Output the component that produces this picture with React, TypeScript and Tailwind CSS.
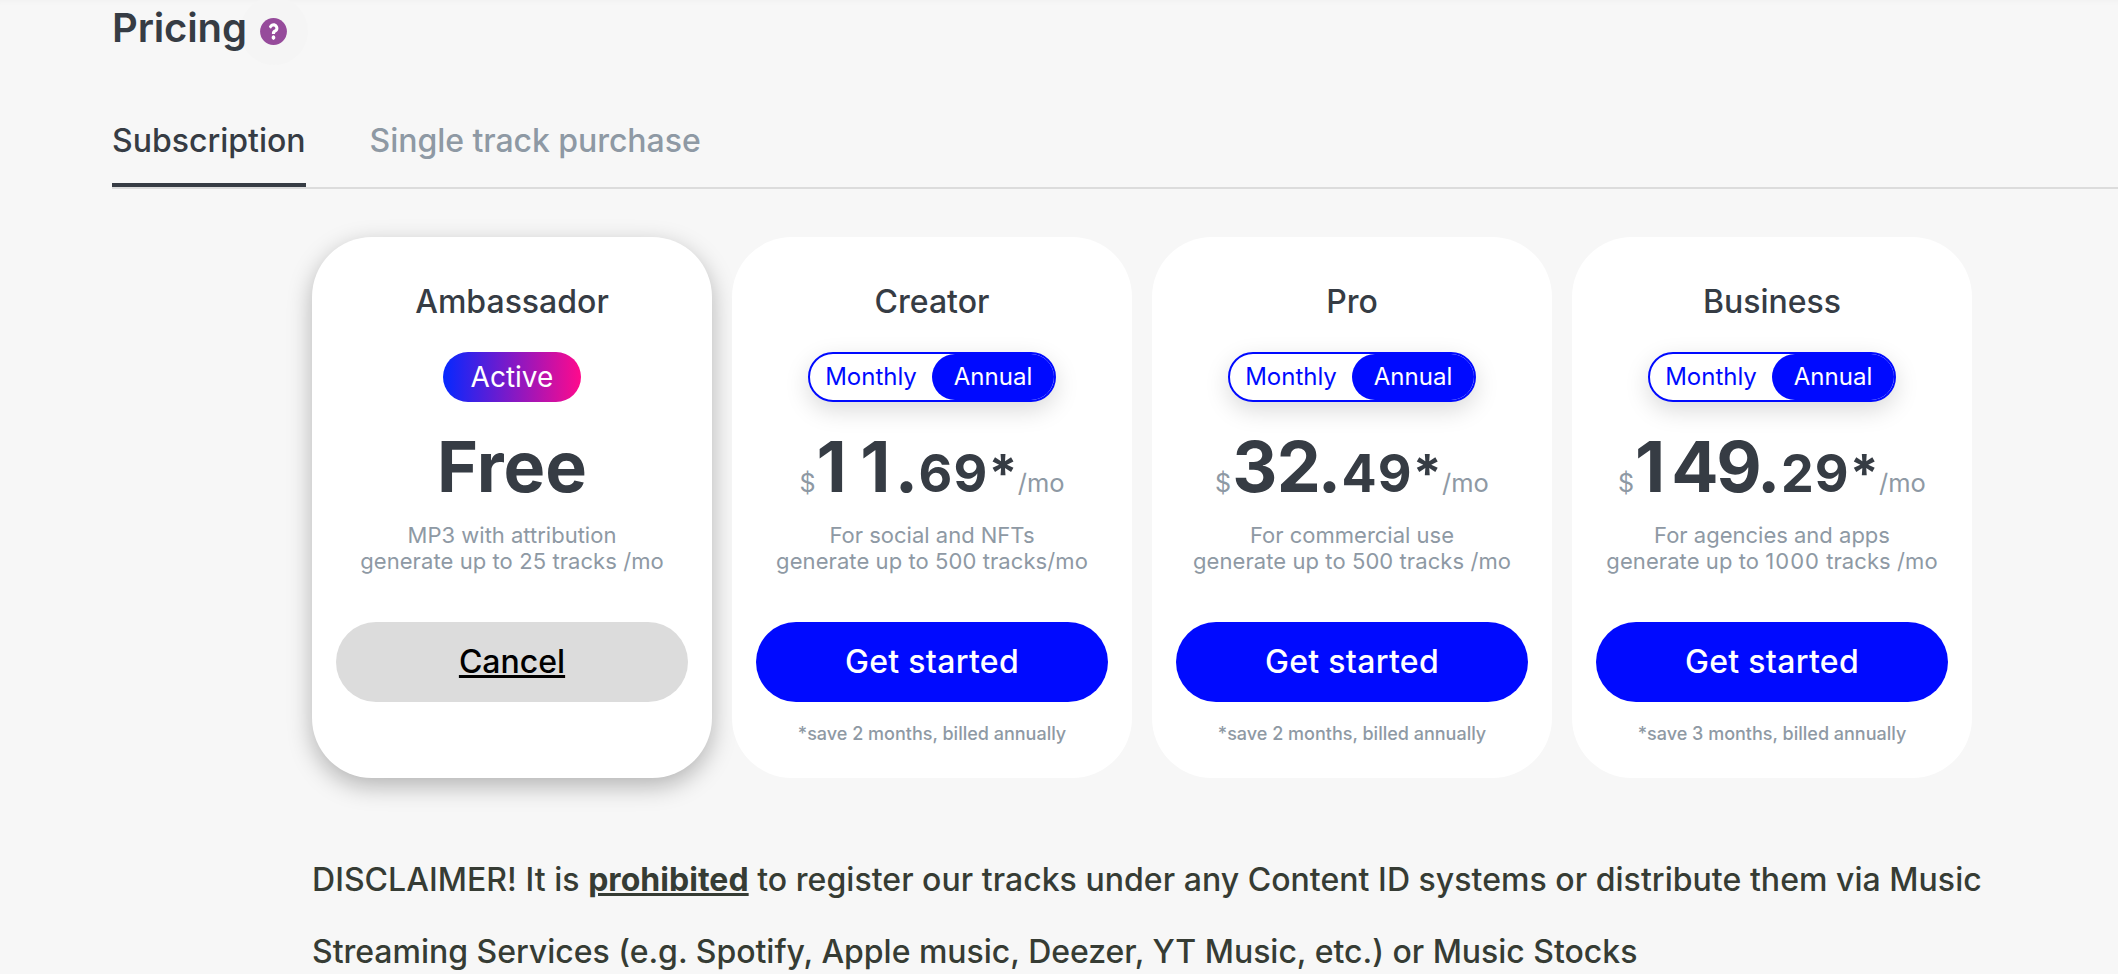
import React from "react";

type Plan = {
    name: string;
    price?: { whole: React.ReactNode; cents: string };
    desc: [string, React.ReactNode];
    note?: string;
};

const plans: Plan[] = [
    { name: "Ambassador", desc: ["MP3 with attribution", "generate up to 25 tracks /mo"] },
    {
        name: "Creator",
        price: {
            whole: (
                <>
                    <span className="tracking-[13.6px]">1</span>
                    <span className="tracking-[4.3px]">1</span>.
                </>
            ),
            cents: "69*",
        },
        desc: ["For social and NFTs", "generate up to 500 tracks/mo"],
        note: "*save 2 months, billed annually",
    },
    {
        name: "Pro",
        price: {
            whole: (
                <>
                    3<span className="tracking-[-3.2px]">2</span>.
                </>
            ),
            cents: "49*",
        },
        desc: ["For commercial use", "generate up to 500 tracks /mo"],
        note: "*save 2 months, billed annually",
    },
    {
        name: "Business",
        price: {
            whole: (
                <>
                    <span className="tracking-[6px]">1</span>
                    <span className="tracking-[-2.3px]">4</span>
                    <span className="tracking-[-4.7px]">9</span>.
                </>
            ),
            cents: "29*",
        },
        desc: [
            "For agencies and apps",
            <>
                generate up to <span className="tracking-[1px]">1000</span> tracks /mo
            </>,
        ],
        note: "*save 3 months, billed annually",
    },
];

export default function App() {
    return (
        <div className="h-[974px] w-full overflow-hidden bg-[#f7f7f7] font-['Inter',sans-serif] text-[#363c44] shadow-[inset_0_6px_6px_-5px_rgba(0,0,0,0.03)]">
            <header className="flex h-14 items-center pl-28">
                <h1 className="relative z-10 text-[40px] leading-14 font-semibold tracking-[-0.15px]">Pricing</h1>
                <HelpButton />
            </header>

            {/* tabs */}
            <nav className="mt-10 ml-28 flex h-[93px] gap-16 border-b-2 border-[#dcdcdc] text-[32px] font-medium">
                <a className="h-[91px] border-b-4 border-[#363c44] pt-[25px] leading-10">Subscription</a>
                <a className="pt-[25px] leading-10 tracking-[-0.05px] text-[#8e99a4]">Single track purchase</a>
            </nav>

            {/* plans */}
            <section className="mt-12 ml-78 flex gap-5">
                {plans.map((plan) => (
                    <PlanCard key={plan.name} plan={plan} />
                ))}
            </section>

            <p className="mt-[66px] ml-78 w-[1700px] text-[32px] leading-[72px] font-medium tracking-[-0.02px] text-[#363c34]">
                <span className="tracking-[0.04px]">
                    DISCLAIMER! It is <b className="font-bold underline">prohibited</b> to register our tracks under any
                    Content ID systems or distribute them via Music
                </span>
                <br />
                Streaming Services (e.g. Spotify, Apple music, Deezer, YT Music, etc.) or Music Stocks
            </p>
        </div>
    );
}

const HelpButton = () => (
    <button className="mt-[6px] -ml-[7px] flex size-[68px] items-center justify-center rounded-full bg-[#f5f5f5]">
        <svg viewBox="0 0 512 512" className="size-[27px]">
            <circle cx="256" cy="256" r="254" fill="#964b9b" />
            <path
                fill="#fff"
                transform="translate(61 15) scale(0.76 0.93)"
                d="M262.655 90c-54.497 0-89.255 22.957-116.549 63.758-3.536 5.286-2.353 12.415 2.715 16.258l34.699 26.31c5.205 3.947 12.621 3.008 16.665-2.122 17.864-22.658 30.113-35.797 57.303-35.797 20.429 0 45.698 13.148 45.698 32.958 0 14.976-12.363 22.667-32.534 33.976C247.128 238.528 216 254.941 216 296v4c0 6.627 5.373 12 12 12h56c6.627 0 12-5.373 12-12v-1.333c0-28.462 83.186-29.647 83.186-106.667 0-58.002-60.165-102-116.531-102zM256 338c-25.365 0-46 20.635-46 46 0 25.364 20.635 46 46 46s46-20.636 46-46c0-25.365-20.635-46-46-46z"
            />
        </svg>
    </button>
);

const PlanCard = ({ plan }: { plan: Plan }) => (
    <article
        className={`flex h-[541px] w-[400px] flex-col items-center rounded-[60px] bg-white px-6 pt-[45px] ${
            plan.price ? "" : "shadow-[0_8px_24px_rgba(0,0,0,0.28)]"
        }`}>
        <h2 className="text-[32px] leading-10 font-medium">{plan.name}</h2>
        {plan.price ? <PeriodToggle /> : <ActiveBadge />}

        {plan.price ? (
            <div className="mt-[23px] flex h-21 items-baseline leading-[84px]">
                <span className="mr-px text-[25px] text-[#8e99a4]">$</span>
                <span className="text-[70px] font-bold tracking-[-0.6px]">{plan.price.whole}</span>
                <span className="ml-px text-[52px] font-bold tracking-[1.2px]">{plan.price.cents}</span>
                <span className="-ml-px text-[25.5px] text-[#8e99a4]">/mo</span>
            </div>
        ) : (
            <div className="mt-[23px] h-21 text-[70px] leading-[84px] font-bold">Free</div>
        )}

        <p className="mt-[13px] text-center text-[22px] leading-[26px] whitespace-nowrap text-[#8e99a4]">
            {plan.desc[0]}
            <br />
            <span className="tracking-[0.08px]">{plan.desc[1]}</span>
        </p>

        <button
            className={`mt-12 h-20 w-full rounded-full text-[32px] font-medium ${
                plan.price ? "bg-[#000aff] tracking-[0.01em] text-white" : "bg-[#dcdcdc] text-black underline"
            }`}>
            {plan.price ? "Get started" : "Cancel"}
        </button>
        {plan.note && (
            <span className="mt-5 text-[18px] leading-6 font-medium text-[#8e99a4]">{plan.note}</span>
        )}
    </article>
);

const ActiveBadge = () => (
    <span className="mt-[30px] flex h-[50px] w-[138px] items-center justify-center rounded-full bg-[linear-gradient(90deg,#0528ff,#ff0a8c)] text-[28px] text-white">
        Active
    </span>
);

const PeriodToggle = () => (
    <div className="mt-[30px] flex h-[50px] w-[248px] rounded-full border-2 border-[#000aff] bg-white text-2xl leading-[46px] shadow-[0_8px_24px_rgba(0,0,0,0.15)]">
        <span className="w-[122px] text-center text-[#000aff]">Monthly</span>
        <span className="w-[122px] rounded-full bg-[#000aff] text-center text-white">Annual</span>
    </div>
);
